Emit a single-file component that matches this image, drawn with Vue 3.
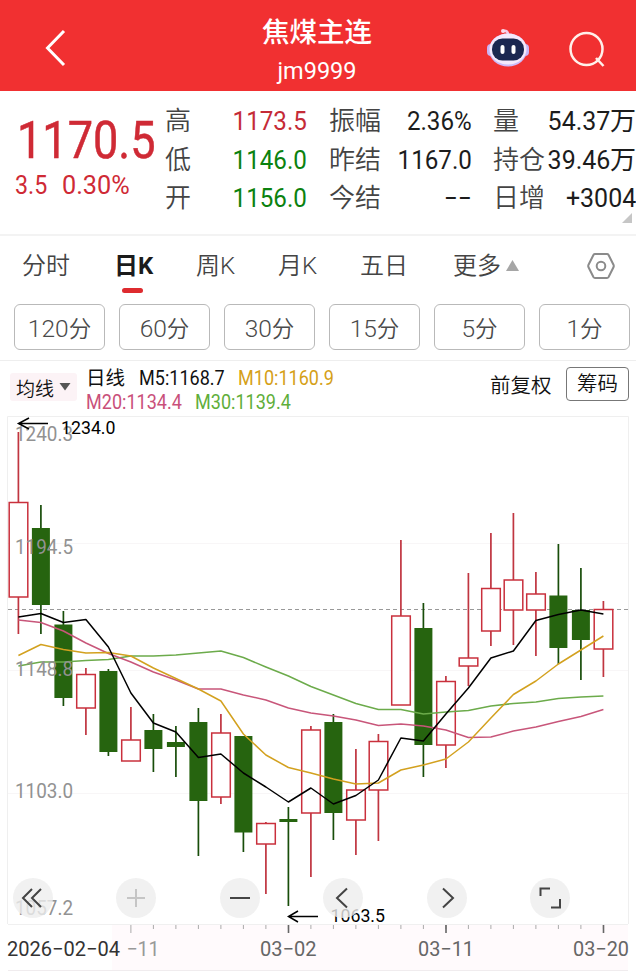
<template>
  <div class="page">
    <header class="topbar">
      <svg class="back" width="30" height="44" viewBox="0 0 30 44" fill="none" stroke="#fff" stroke-width="3">
        <path d="M24 6L7.500 23L24 40" />
      </svg>
      <div class="title">
        <div class="name">焦煤主连</div>
        <div class="code">jm9999</div>
      </div>
      <svg class="robot" width="44" height="42" viewBox="0 0 44 42">
        <path d="M22 8C22 4 20 3.500 17.500 4" fill="none" stroke="#f7c9e6" stroke-width="2.600" stroke-linecap="round" />
        <circle cx="17" cy="4" r="2" fill="#fbd9ea" />
        <rect x="1" y="17" width="8" height="12" rx="4" fill="#c9b4f6" />
        <rect x="35" y="17" width="8" height="12" rx="4" fill="#c9b4f6" />
        <ellipse cx="22" cy="23" rx="19" ry="16.500" fill="#cdbcfa" />
        <ellipse cx="22" cy="22" rx="18.500" ry="15.500" fill="#f4e9fc" />
        <rect x="6" y="11.500" width="32" height="22" rx="10.500" fill="#1b2750" />
        <rect x="14.500" y="18" width="4" height="9" rx="2" fill="#fff" />
        <rect x="25.500" y="18" width="4" height="9" rx="2" fill="#fff" />
      </svg>
      <svg class="search" width="38" height="38" viewBox="0 0 38 38" fill="none" stroke="#fff0ea" stroke-width="2.500">
        <circle cx="18.500" cy="18" r="16" />
        <path d="M28 27L35.500 35" />
      </svg>
    </header>

    <section class="quote">
      <div class="last">
        <div class="price"><span>1170.5</span></div>
        <div class="change"><span>3.5</span><span>0.30%</span></div>
      </div>
      <div class="stats">
        <template v-for="row in stats" :key="row[0].label">
          <template v-for="cell in row" :key="cell.label">
            <span class="label">{{ cell.label }}</span>
            <span class="value" :class="cell.tone"><b>{{ cell.value }}</b><i v-if="cell.unit">{{ cell.unit }}</i></span>
          </template>
        </template>
      </div>
      <svg class="corner" width="10" height="10" viewBox="0 0 10 10"><path d="M10 0V10H0Z" fill="#c6c6c6" /></svg>
    </section>

    <nav class="tabs">
      <span v-for="tab in tabs" :key="tab" class="tab" :class="{ active: tab === '日K' }">{{ tab }}</span>
      <span class="tab">更多<svg width="13" height="11" viewBox="0 0 13 11"><path d="M6.500 0L13 11H0Z" fill="#a6a6a6" /></svg></span>
      <svg class="setting" width="30" height="28" viewBox="0 0 30 28" fill="none" stroke="#8b8b8b" stroke-width="2">
        <path d="M9 2H21Q22 2 22.600 3L27.600 13Q28 14 27.600 15L22.600 25Q22 26 21 26H9Q8 26 7.400 25L2.400 15Q2 14 2.400 13L7.400 3Q8 2 9 2Z" />
        <circle cx="15" cy="14" r="4.300" />
      </svg>
    </nav>

    <div class="periods">
      <button v-for="p in periods" :key="p"><span>{{ p }}</span>分</button>
    </div>

    <div class="legend">
      <div class="picker">均线<svg width="12" height="8" viewBox="0 0 12 8"><path d="M0.500 0H11.500L6 7.500Z" fill="#555" /></svg></div>
      <div class="averages">
        <div class="line first">
          <span class="kind">日线</span>
          <span class="ma">M5:1168.7</span>
          <span class="ma m10">M10:1160.9</span>
        </div>
        <div class="line">
          <span class="ma m20">M20:1134.4</span>
          <span class="ma m30">M30:1139.4</span>
        </div>
      </div>
      <span class="adjust">前复权</span>
      <button class="chips">筹码</button>
    </div>

    <div class="chart">
      <svg width="636" height="563" viewBox="0 412 636 563">
        <rect x="112" y="925" width="516" height="45" fill="#fffafc" />
        <g stroke="#f8f6f7" stroke-width="1">
          <path v-for="y in [543.5, 670.5, 793.5]" :key="y" :d="`M8 ${y}H628`" />
        </g>
        <path d="M7.500 924V416.500H628.500V924" fill="none" stroke="#efefef" />
        <path d="M8 924.500H628" stroke="#f0f0f0" />
        <path d="M8 970.500H628" stroke="#f0ecee" />
        <path d="M8 609.500H628" stroke="#999" stroke-dasharray="4 3" />

        <g v-for="(c, i) in candles" :key="i">
          <template v-if="c[4]">
            <path :d="`M${x(i)} ${c[0]}V${c[1]}M${x(i)} ${c[2]}V${c[3]}`" stroke="#c03540" stroke-width="1.700" />
            <rect :x="x(i) - 9.2" :y="c[1]" width="18.600" :height="c[2] - c[1]" fill="#fff" stroke="#c9303c" stroke-width="1.500" />
          </template>
          <template v-else>
            <path :d="`M${x(i)} ${c[0]}V${c[3]}`" stroke="#184d0a" stroke-width="1.700" />
            <rect :x="x(i) - 9" :y="c[1]" width="18" :height="c[2] - c[1]" fill="#26640f" />
          </template>
        </g>

        <g fill="none" stroke-width="1.500" stroke-linejoin="round">
          <polyline :points="points(ma30)" stroke="#6cab4b" />
          <polyline :points="points(ma20)" stroke="#c8567a" />
          <polyline :points="points(ma10)" stroke="#d3a11f" />
          <polyline :points="points(ma5)" stroke="#000" />
        </g>

        <g class="axis">
          <text v-for="a in axis" :key="a.y" x="15" :y="a.y" textLength="58" lengthAdjust="spacingAndGlyphs">{{ a.text }}</text>
        </g>

        <g fill="none" stroke="#000" stroke-width="1.500">
          <path d="M48 423.500H19M29 418L18.500 423.500L29 429" />
          <path d="M318 916.500H289M298 911L288.500 916.500L298 922" />
        </g>
        <g class="mark">
          <text x="61" y="433.500" textLength="54.500" lengthAdjust="spacingAndGlyphs">1234.0</text>
          <text x="330.500" y="922" textLength="54.500" lengthAdjust="spacingAndGlyphs">1063.5</text>
        </g>

        <g stroke="#aaa" stroke-width="1">
          <path v-for="i in 22" :key="i" :d="`M${x(i + 4)} 925V${i === 1 ? 933 : 929}`" />
          <path d="M288.500 925V933M446 925V933M603.500 925V933" stroke="#666" stroke-width="1.600" />
        </g>
        <g class="dates">
          <text x="7" y="956" textLength="113" lengthAdjust="spacingAndGlyphs" fill="#333">2026−02−04</text>
          <text x="126.500" y="956" textLength="33" lengthAdjust="spacingAndGlyphs" fill="#999">−11</text>
          <text x="260" y="956" textLength="56.500" lengthAdjust="spacingAndGlyphs">03−02</text>
          <text x="418" y="956" textLength="56" lengthAdjust="spacingAndGlyphs">03−11</text>
          <text x="573" y="956" textLength="56" lengthAdjust="spacingAndGlyphs">03−20</text>
        </g>
      </svg>

      <div class="controls">
        <button v-for="c in controls" :key="c.name" :aria-label="c.name" :class="c.name">
          <svg width="40" height="40" viewBox="0 0 40 40" fill="none" stroke="#444" stroke-width="2"><path :d="c.path" /></svg>
        </button>
      </div>
    </div>
  </div>
</template>

<script setup>
const stats = [
  [
    { label: '高', value: '1173.5', tone: 'up' },
    { label: '振幅', value: '2.36%' },
    { label: '量', value: '54.37', unit: '万' }
  ],
  [
    { label: '低', value: '1146.0', tone: 'down' },
    { label: '昨结', value: '1167.0' },
    { label: '持仓', value: '39.46', unit: '万' }
  ],
  [
    { label: '开', value: '1156.0', tone: 'down' },
    { label: '今结', value: '−−' },
    { label: '日增', value: '+3004' }
  ]
];

const tabs = ['分时', '日K', '周K', '月K', '五日'];
const periods = [120, 60, 30, 15, 5, 1];

// high, body top, body bottom, low, rising
const candles = [
  [432, 502.5, 597, 634, 1],
  [505, 528, 605, 634, 0],
  [611, 624.5, 698, 706, 0],
  [668, 674.5, 708, 735, 1],
  [669, 671, 752, 756, 0],
  [707, 740, 761, 761, 1],
  [714, 730, 749, 772, 0],
  [726, 742, 747, 777, 0],
  [708, 722, 801, 856, 0],
  [714, 733, 797, 804, 1],
  [736, 736, 832.5, 852, 0],
  [822, 823.5, 844, 894, 1],
  [807, 819, 822, 906, 0],
  [726, 730, 813, 877, 1],
  [714, 722, 813, 840, 0],
  [749, 790, 820, 855, 1],
  [734, 741.5, 790, 841, 1],
  [540, 616, 705, 705, 1],
  [603, 628, 745, 777, 0],
  [676, 681.5, 745, 768, 1],
  [573, 658, 666, 686, 1],
  [533, 588.5, 631, 646, 1],
  [513, 580, 610, 645, 1],
  [572, 594, 610, 656, 1],
  [544, 595.5, 648, 664, 0],
  [568, 610, 640, 680, 0],
  [601, 609.5, 649, 677, 1]
];

const ma5 = [617, 613.5, 622.5, 619.5, 647, 693, 723, 732, 757.5, 754, 773, 787, 802, 788, 804, 795.5, 780, 738, 741, 714, 688, 658, 651, 620.5, 614.5, 610, 614];
const ma10 = [655.5, 644.5, 649.5, 653, 652.5, 656, 668, 678.5, 689, 701, 734, 755, 767.5, 773, 779, 784, 783, 770, 765, 759, 742, 718, 694.5, 681, 664, 650, 636];
const ma20 = [620, 622.5, 631, 643, 653.5, 662, 672, 680, 689, 689, 695, 700, 708, 713, 716, 720, 725.5, 724, 726, 730, 737.5, 737, 731, 727, 721.5, 716.5, 709.5];
const ma30 = [666, 662, 662, 660.5, 659.5, 656, 656, 655, 653, 651, 657.5, 667, 676, 686.5, 695, 703.5, 709.5, 709.5, 714, 712, 710.5, 706, 703.5, 702, 698.5, 697, 696];

const axis = [
  { text: '1240.3', y: 441 },
  { text: '1194.5', y: 553.5 },
  { text: '1148.8', y: 675.5 },
  { text: '1103.0', y: 797.5 },
  { text: '1057.2', y: 914.5 }
];

const controls = [
  { name: 'first', path: 'M19 11L10 20L19 29M28 11L19 20L28 29' },
  { name: 'zoom-in', path: 'M11 20H29M20 11V29' },
  { name: 'zoom-out', path: 'M10 20H30' },
  { name: 'prev', path: 'M24 10.500L14 20L24 29.500' },
  { name: 'next', path: 'M16 10.500L26 20L16 29.500' },
  { name: 'fullscreen', path: 'M10.500 18V10.500H20M30 21V29.500H21' }
];

const x = (i) => 18.4 + i * 22.5;
const points = (values) => values.map((v, i) => `${x(i)},${v}`).join(' ');
</script>

<style>
body {
  background: #fff;
  overflow: hidden;
}
</style>

<style scoped>
.page {
  width: 636px;
  height: 975px;
  overflow: hidden;
  background: #fff;
  color: #222;
  font-family: Roboto, "Noto Sans CJK SC", sans-serif;
}

button {
  padding: 0;
  border: none;
  background: none;
  font-family: inherit;
  color: inherit;
}

svg {
  display: block;
}

.topbar {
  box-sizing: border-box;
  height: 91px;
  padding: 0 30px 0 43px;
  display: grid;
  grid-template-columns: 204px 140px 99px 82px 38px;
  background: #f13031;
  color: #fff;
}

.back {
  margin-top: 25px;
  margin-left: -3px;
}

.title {
  text-align: center;
  padding-top: 14px;
}

.name {
  font-size: 27.500px;
  line-height: 38px;
  font-weight: 500;
}

.code {
  font-size: 24px;
  line-height: 38px;
  font-weight: 400;
  transform: scaleX(0.98);
}

.robot {
  margin: 27px 0 0 99px;
}

.search {
  margin: 31px 0 0 82px;
}

.quote {
  position: relative;
  display: flex;
  height: 143px;
  border-bottom: 2px solid #f3f3f3;
}

.last {
  width: 165px;
  color: #cf2a35;
}

.price {
  padding: 20px 0 0 17px;
  font-size: 51.500px;
  line-height: 60px;
  font-weight: 400;
  -webkit-text-stroke: 0.500px currentColor;
}

.price span,
.change span {
  display: inline-block;
  transform: scaleX(0.875);
  transform-origin: left;
}

.change {
  display: grid;
  grid-template-columns: 47px 70px;
  padding-left: 15px;
  font-size: 25px;
  line-height: 30px;
}

.change span {
  justify-self: start;
  transform: scaleX(0.93);
}

.change span:last-child {
  transform: scaleX(1.01);
}

.stats {
  display: grid;
  grid-template-columns: 52px 90px 75px 90px 63px 101px;
  grid-template-rows: repeat(3, 38.500px);
  width: 471px;
  padding-top: 11px;
  line-height: 38px;
  white-space: nowrap;
}

.label {
  font-size: 26px;
  font-weight: 350;
  color: #444;
}

.value {
  display: flex;
  justify-content: flex-end;
  font-size: 26px;
  color: #1c1c1c;
}

.stats > :nth-child(6n + 3) {
  padding-left: 22px;
}

.stats > :nth-child(6n + 5) {
  padding-left: 21px;
}

.value b {
  font-weight: 400;
  transform: scaleX(0.93);
  transform-origin: right;
}

.stats > :nth-child(6n) b {
  transform: scaleX(0.96);
}

.value i {
  font-style: normal;
}

.up {
  color: #c52b37;
}

.down {
  color: #0b820f;
}

.corner {
  position: absolute;
  left: 622px;
  top: 122px;
}

.tabs {
  display: grid;
  grid-template-columns: 92px 82px 82px 82px 93px 133px 30px;
  height: 68px;
  padding-left: 22px;
  font-size: 24px;
  line-height: 61px;
  color: #444;
  font-weight: 350;
}

.tab {
  position: relative;
  white-space: nowrap;
}

.tab svg {
  display: inline-block;
  margin-left: 5px;
  vertical-align: 3px;
}

.tab.active {
  font-weight: 700;
  color: #1b1b1b;
}

.tab.active::after {
  content: "";
  position: absolute;
  left: 8px;
  top: 52px;
  width: 21px;
  height: 5px;
  border-radius: 3px;
  background: #de2b2f;
}

.setting {
  margin-top: 16px;
}

.periods {
  display: grid;
  grid-template-columns: repeat(6, 91px);
  gap: 14px;
  height: 56px;
  padding-left: 14px;
  border-bottom: 1px solid #eee;
}

.periods button {
  box-sizing: border-box;
  height: 46px;
  border: 1px solid #b9b9b9;
  border-radius: 6px;
  font-size: 22.500px;
  font-weight: 350;
  color: #4a4a4a;
}

.periods span {
  font-size: 24.500px;
}

.legend {
  display: flex;
  height: 51px;
  color: #111;
}

.picker {
  display: flex;
  align-items: center;
  gap: 5px;
  width: 61px;
  height: 28px;
  margin: 12px 9px 0 10px;
  padding-left: 6px;
  background: #fcf3f6;
  border-radius: 3px;
  font-size: 19px;
  font-weight: 350;
}

.averages {
  width: 404px;
  padding-top: 6px;
}

.line {
  display: grid;
  grid-template-columns: 109px auto;
  height: 24px;
  line-height: 24px;
  font-size: 19.500px;
}

.line.first {
  grid-template-columns: 53px 99px auto;
}

.ma {
  transform: scaleX(0.925);
  transform-origin: left;
  justify-self: start;
}

.m10 {
  color: #d5a017;
}

.m20 {
  color: #c9507a;
}

.m30 {
  color: #5fae3a;
}

.adjust {
  width: 76px;
  font-size: 20.500px;
  line-height: 51px;
  font-weight: 350;
}

.chips {
  box-sizing: border-box;
  width: 63px;
  height: 34px;
  margin-top: 6px;
  border: 1px solid #777;
  border-radius: 4px;
  font-size: 20.500px;
  line-height: 32px;
  font-weight: 350;
}

.chart {
  position: relative;
}

.axis {
  fill: #929292;
  font-size: 20px;
}

.mark {
  fill: #000;
  font-size: 18.500px;
}

.dates {
  fill: #666;
  font-size: 20px;
}

.controls {
  position: absolute;
  left: 13px;
  top: 466px;
  width: 557px;
  display: flex;
  justify-content: space-between;
}

.controls button {
  width: 40px;
  height: 40px;
  border-radius: 50%;
  background: rgba(238, 238, 238, 0.8);
}

.controls .zoom-in svg {
  opacity: 0.25;
}
</style>
